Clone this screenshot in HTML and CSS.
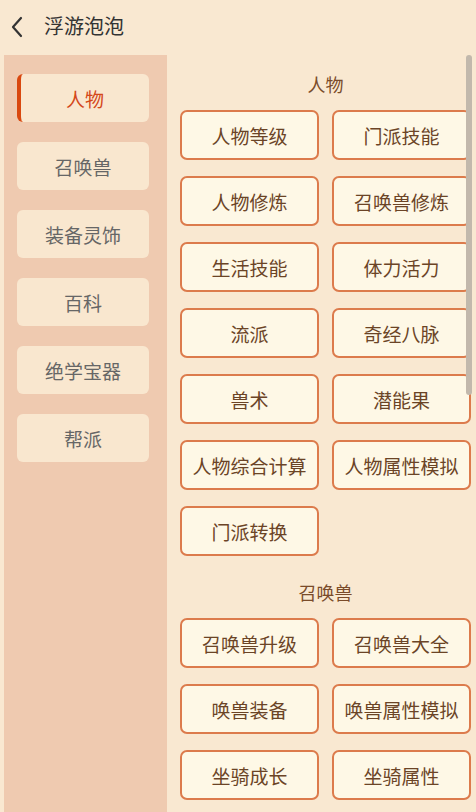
FILE: index.html
```html
<!DOCTYPE html>
<html lang="zh">
<head>
    <meta charset="UTF-8">
    <meta name="viewport" content="width=device-width, initial-scale=1.0">
    <title>浮游泡泡</title>
<link rel="stylesheet" href="styles.css">
</head>
<body>
    <header class="topbar">
        <svg class="back" width="14" height="22" viewBox="0 0 14 22">
            <path d="M11 2 L3 11 L11 20" fill="none" stroke="#333" stroke-width="2.2" stroke-linecap="round" stroke-linejoin="round"/>
        </svg>
        <h1>浮游泡泡</h1>
    </header>

    <div class="main">
        <!-- 左侧分类 -->
        <aside class="sidebar">
            <div class="side-item active">人物</div>
            <div class="side-item">召唤兽</div>
            <div class="side-item">装备灵饰</div>
            <div class="side-item">百科</div>
            <div class="side-item">绝学宝器</div>
            <div class="side-item">帮派</div>
        </aside>

        <div class="content">
            <section class="group">
                <h2>人物</h2>
                <div class="grid">
                    <div class="tool">人物等级</div>
                    <div class="tool">门派技能</div>
                    <div class="tool">人物修炼</div>
                    <div class="tool">召唤兽修炼</div>
                    <div class="tool">生活技能</div>
                    <div class="tool">体力活力</div>
                    <div class="tool">流派</div>
                    <div class="tool">奇经八脉</div>
                    <div class="tool">兽术</div>
                    <div class="tool">潜能果</div>
                    <div class="tool">人物综合计算</div>
                    <div class="tool">人物属性模拟</div>
                    <div class="tool">门派转换</div>
                </div>
            </section>

            <section class="group">
                <h2>召唤兽</h2>
                <div class="grid">
                    <div class="tool">召唤兽升级</div>
                    <div class="tool">召唤兽大全</div>
                    <div class="tool">唤兽装备</div>
                    <div class="tool">唤兽属性模拟</div>
                    <div class="tool">坐骑成长</div>
                    <div class="tool">坐骑属性</div>
                </div>
            </section>

            <div class="scrollbar"></div>
        </div>
    </div>
</body>
</html>
```

FILE: styles.css
```css
body {
    margin: 0;
    padding: 0;
    background-color: #f9e8d1;
    font-family: "Noto Sans CJK SC", "Noto Sans", sans-serif;
    height: 812px;
    overflow: hidden;
}

.topbar {
    height: 55px;
    display: flex;
    align-items: center;
    padding-left: 10px;
}

.topbar .back {
    margin-top: -2px;
}

.topbar h1 {
    margin: 0 0 0 20px;
    font-size: 20px;
    font-weight: normal;
    color: #333;
    line-height: 1;
    margin-top: -4px;
}

.main {
    display: flex;
    padding-left: 4px;
    height: 757px;
}

.sidebar {
    width: 163px;
    background-color: #efcab0;
    padding: 19px 0 0 13px;
    box-sizing: border-box;
    display: flex;
    flex-direction: column;
    gap: 20px;
}

.side-item {
    width: 132px;
    height: 48px;
    background-color: #f9e7cf;
    border-radius: 6px;
    display: flex;
    align-items: center;
    justify-content: center;
    font-size: 19px;
    color: #666;
    box-sizing: border-box;
}

.side-item.active {
    color: #d4481a;
    border-left: 4px solid #d9480f;
}

.content {
    position: relative;
    flex: 1;
    padding: 9px 5px 0 13px;
    display: flex;
    flex-direction: column;
    gap: 16px;
}

.group h2 {
    margin: 0 0 6px 0;
    height: 40px;
    line-height: 40px;
    text-align: center;
    font-size: 18px;
    font-weight: normal;
    color: #7a4b2a;
}

.grid {
    display: grid;
    grid-template-columns: 139px 139px;
    column-gap: 13px;
    row-gap: 16px;
}

.tool {
    height: 50px;
    box-sizing: border-box;
    border: 2px solid #dc7b4c;
    border-radius: 7px;
    background-color: #fef8e6;
    display: flex;
    align-items: center;
    justify-content: center;
    font-size: 19px;
    color: #6b4426;
}

.scrollbar {
    position: absolute;
    right: 4px;
    top: 0;
    width: 6px;
    height: 340px;
    background-color: #c2b8ac;
    border-radius: 3px;
}
```
